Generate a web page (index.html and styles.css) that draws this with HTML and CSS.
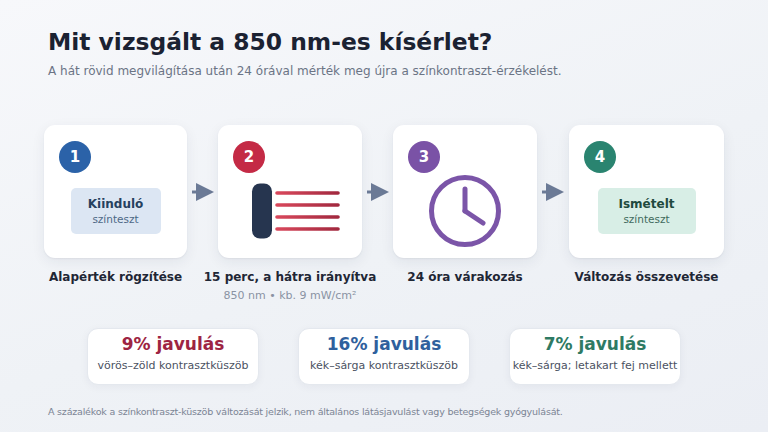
FILE: index.html
```html
<!DOCTYPE html>
<html lang="hu">
<head>
<meta charset="utf-8">
<title>Mit vizsgált a 850 nm-es kísérlet?</title>
<link rel="stylesheet" href="styles.css">
</head>
<body>
<main class="page">
  <header class="header">
    <h1 class="title">Mit vizsgált a 850 nm-es kísérlet?</h1>
    <p class="subtitle">A hát rövid megvilágítása után 24 órával mérték meg újra a színkontraszt-érzékelést.</p>
  </header>

  <section class="steps">
    <div class="step step-1">
      <div class="card">
        <span class="badge badge-blue">1</span>
        <div class="visual">
          <div class="test-box test-blue">
            <span class="test-title">Kiinduló</span>
            <span class="test-sub">színteszt</span>
          </div>
        </div>
      </div>
      <div class="step-label">Alapérték rögzítése</div>
    </div>

    <div class="arrow">
      <svg width="22" height="18" viewBox="0 0 22 18"><line x1="0" y1="9" x2="6" y2="9" stroke="#6b7a96" stroke-width="3"/><polygon points="4,0 22,9 4,18" fill="#6b7a96"/></svg>
    </div>

    <div class="step step-2">
      <div class="card">
        <span class="badge badge-red">2</span>
        <div class="visual">
          <svg class="lamp" width="100" height="56" viewBox="0 0 100 56">
            <defs>
              <linearGradient id="ray" gradientUnits="userSpaceOnUse" x1="33" y1="0" x2="96" y2="0">
                <stop offset="0" stop-color="#d9485c"/>
                <stop offset="1" stop-color="#a1283e"/>
              </linearGradient>
            </defs>
            <rect x="9" y="0.5" width="20" height="55" rx="8" fill="#26354f"/>
            <g stroke="url(#ray)" stroke-width="3.6" stroke-linecap="round">
              <line x1="34" y1="10" x2="95" y2="10"/>
              <line x1="34" y1="22" x2="95" y2="22"/>
              <line x1="34" y1="34" x2="95" y2="34"/>
              <line x1="34" y1="46" x2="95" y2="46"/>
            </g>
          </svg>
        </div>
      </div>
      <div class="step-label">15 perc, a hátra irányítva</div>
      <div class="step-note">850 nm • kb. 9 mW/cm²</div>
    </div>

    <div class="arrow">
      <svg width="22" height="18" viewBox="0 0 22 18"><line x1="0" y1="9" x2="6" y2="9" stroke="#6b7a96" stroke-width="3"/><polygon points="4,0 22,9 4,18" fill="#6b7a96"/></svg>
    </div>

    <div class="step step-3">
      <div class="card">
        <span class="badge badge-purple">3</span>
        <div class="visual">
          <svg class="clock" width="76" height="76" viewBox="0 0 76 76">
            <circle cx="38" cy="38" r="33.5" fill="none" stroke="#7b55a8" stroke-width="5"/>
            <g stroke="#7b55a8" stroke-width="5" stroke-linecap="round">
              <line x1="38" y1="38" x2="38" y2="16"/>
              <line x1="38" y1="38" x2="56" y2="50"/>
            </g>
          </svg>
        </div>
      </div>
      <div class="step-label">24 óra várakozás</div>
    </div>

    <div class="arrow arrow-wide">
      <svg width="22" height="18" viewBox="0 0 22 18"><line x1="0" y1="9" x2="6" y2="9" stroke="#6b7a96" stroke-width="3"/><polygon points="4,0 22,9 4,18" fill="#6b7a96"/></svg>
    </div>

    <div class="step step-4">
      <div class="card">
        <span class="badge badge-green">4</span>
        <div class="visual">
          <div class="test-box test-green">
            <span class="test-title">Ismételt</span>
            <span class="test-sub">színteszt</span>
          </div>
        </div>
      </div>
      <div class="step-label">Változás összevetése</div>
    </div>
  </section>

  <section class="stats">
    <div class="stat">
      <div class="stat-value value-red">9% javulás</div>
      <div class="stat-desc">vörös–zöld kontrasztküszöb</div>
    </div>
    <div class="stat">
      <div class="stat-value value-blue">16% javulás</div>
      <div class="stat-desc">kék–sárga kontrasztküszöb</div>
    </div>
    <div class="stat">
      <div class="stat-value value-green">7% javulás</div>
      <div class="stat-desc">kék–sárga; letakart fej mellett</div>
    </div>
  </section>

  <p class="footnote">A százalékok a színkontraszt-küszöb változását jelzik, nem általános látásjavulást vagy betegségek gyógyulását.</p>
</main>
</body>
</html>
```

FILE: styles.css
```css
* { box-sizing: border-box; }

html, body {
  margin: 0;
  padding: 0;
}

body {
  width: 768px;
  height: 432px;
  overflow: hidden;
  font-family: "DejaVu Sans", "Liberation Sans", sans-serif;
  background: linear-gradient(160deg, #f7f8fb 0%, #eff2f6 55%, #ebeef4 100%);
  color: #1c2433;
}

.page {
  display: flex;
  flex-direction: column;
  padding-top: 27px;
}

.header {
  padding-left: 48px;
}

.title {
  margin: 0;
  font-size: 23.4px;
  line-height: 30px;
  font-weight: 700;
  color: #1b2232;
}

.subtitle {
  margin: 6px 0 0;
  font-size: 12px;
  line-height: 16px;
  color: #6b7485;
}

/* Steps */
.steps {
  display: flex;
  align-items: flex-start;
  margin: 46px 0 0 44px;
}

.step {
  display: flex;
  flex-direction: column;
  align-items: center;
  flex: none;
}

.step-1 { width: 143px; }
.step-2 { width: 144px; }
.step-3 { width: 144px; }
.step-4 { width: 155px; }

.card {
  width: 100%;
  height: 133px;
  background: #ffffff;
  border-radius: 11px;
  box-shadow: 0 1px 2px rgba(30, 42, 70, 0.06), 0 4px 14px rgba(30, 42, 70, 0.07);
  padding: 16px 15px 9px;
  display: flex;
  flex-direction: column;
  align-items: flex-start;
}

.badge {
  width: 32px;
  height: 32px;
  border-radius: 50%;
  color: #ffffff;
  font-weight: 700;
  font-size: 15px;
  display: flex;
  align-items: center;
  justify-content: center;
  flex: none;
}

.badge-blue { background: #2b62a8; }
.badge-red { background: #c42a45; }
.badge-purple { background: #7a52a6; }
.badge-green { background: #2a8470; }

.visual {
  flex: 1;
  align-self: stretch;
  margin: 0 -15px;
  display: flex;
  align-items: center;
  justify-content: center;
}

.test-box {
  height: 46px;
  border-radius: 5px;
  display: flex;
  flex-direction: column;
  align-items: center;
  justify-content: center;
}

.step-1 .test-box { width: 90px; }
.step-4 .test-box { width: 98px; }

.test-blue { background: #dce6f3; }
.test-green { background: #d8eee6; }

.test-title {
  font-size: 12px;
  font-weight: 700;
  line-height: 15px;
}

.test-sub {
  font-size: 10.5px;
  line-height: 14px;
}

.test-blue .test-title { color: #25415f; }
.test-blue .test-sub { color: #4d6886; }
.test-green .test-title { color: #1f4a3e; }
.test-green .test-sub { color: #3f6a5d; }

.lamp { margin-left: 5px; }

.arrow {
  width: 31px;
  height: 133px;
  flex: none;
  display: flex;
  align-items: center;
  justify-content: center;
}

.arrow-wide { width: 32px; }

.step-label {
  margin-top: 11px;
  font-size: 12px;
  line-height: 16px;
  font-weight: 700;
  color: #1f2735;
  white-space: nowrap;
}

.step-note {
  margin-top: 4px;
  font-size: 11px;
  line-height: 14px;
  color: #8a93a3;
  white-space: nowrap;
}

/* Stats */
.stats {
  display: flex;
  justify-content: center;
  gap: 39px;
  margin-top: 25px;
}

.stat {
  width: 172px;
  height: 57px;
  background: #ffffff;
  border: 1px solid #e4e8ee;
  border-radius: 11px;
  box-shadow: 0 2px 8px rgba(30, 42, 70, 0.05);
  padding-top: 5px;
  text-align: center;
}

.stat-value {
  font-size: 17px;
  line-height: 20px;
  font-weight: 700;
}

.value-red { color: #9d2442; }
.value-blue { color: #2f609d; }
.value-green { color: #2e7a63; }

.stat-desc {
  margin-top: 5px;
  font-size: 11px;
  line-height: 14px;
  color: #4b5262;
  white-space: nowrap;
}

.footnote {
  margin: 21px 0 0 48px;
  font-size: 9.5px;
  letter-spacing: -0.2px;
  line-height: 12px;
  color: #7b8494;
}
```
